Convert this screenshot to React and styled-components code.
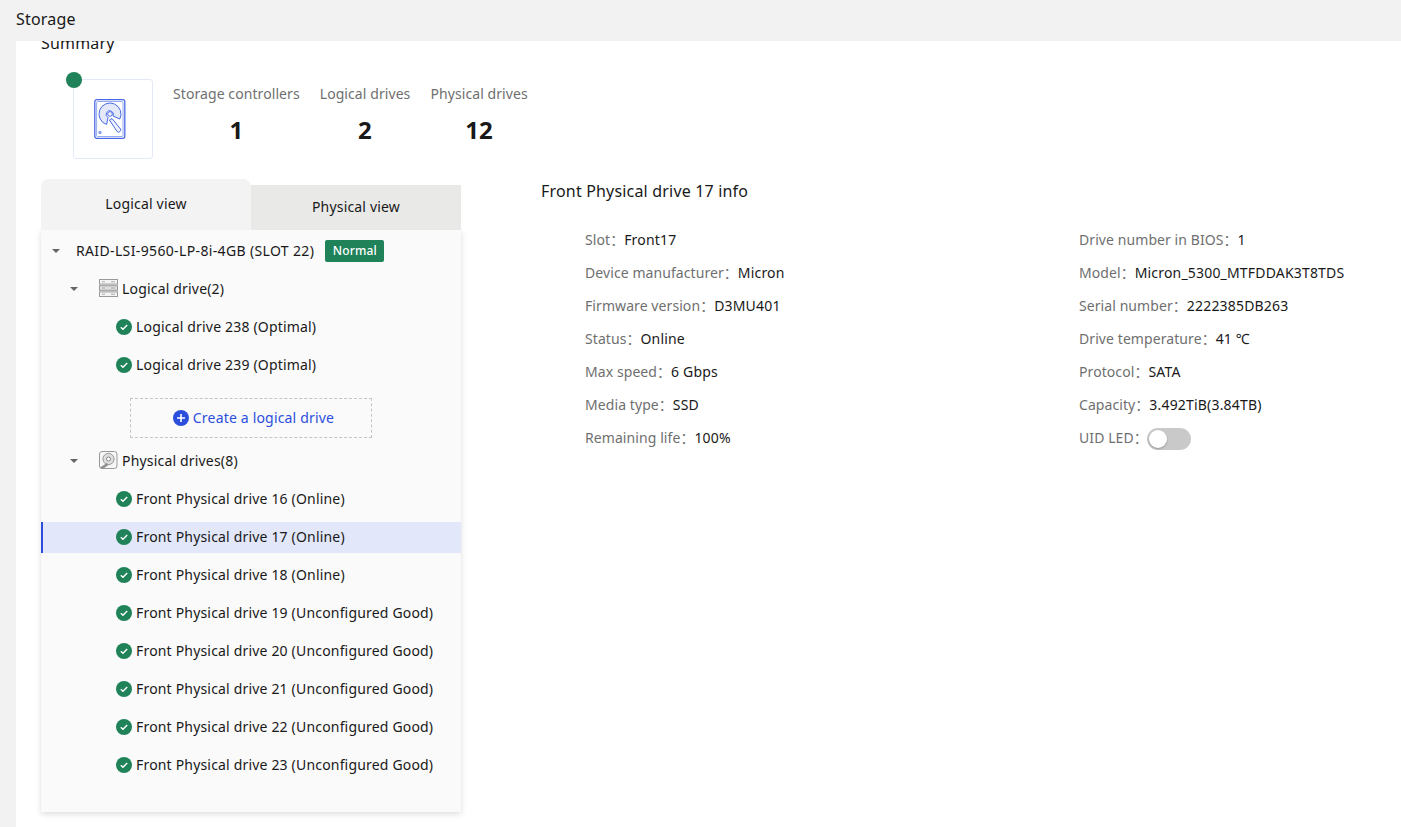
import React from 'react'
import styled, { createGlobalStyle } from 'styled-components'

const GREEN = '#1f8259'
const BLUE = '#2b4fdc'

const Global = createGlobalStyle`
  html, body {
    margin: 0;
    height: 100%;
    overflow: hidden;
    background: #f2f2f2;
    font-family: "Noto Sans", "Noto Sans CJK SC", "Open Sans", sans-serif;
    font-size: 14px;
    letter-spacing: 0.18px;
    color: #191919;
  }
`

const Page = styled.div`
  height: 827px;
  display: flex;
  flex-direction: column;
`

const Header = styled.header`
  flex: 0 0 41px;
  height: 41px;
  padding-left: 16px;
  font-size: 16px;
  line-height: 38px;
  color: #191919;
`

const Main = styled.main`
  flex: 1;
  margin-left: 16px;
  background: #fff;
  overflow: hidden;
  padding-left: 25px;
`

const SectionTitle = styled.h2`
  margin: -9px 0 0;
  font-size: 16px;
  font-weight: 400;
  line-height: 22px;
`

const Summary = styled.section`
  display: flex;
  margin: 25px 0 0 32px;
  gap: 20px;
  height: 80px;
`

const IconBox = styled.div`
  position: relative;
  width: 80px;
  height: 80px;
  box-sizing: border-box;
  border: 1px solid #e4e9fa;
  border-radius: 3px;
  display: flex;
  align-items: center;
  justify-content: center;

  svg {
    margin-right: 6px;
  }
`

const StatusDot = styled.span`
  position: absolute;
  left: -8px;
  top: -8px;
  width: 16px;
  height: 16px;
  border-radius: 50%;
  background: ${GREEN};
`

const Stat = styled.div`
  display: flex;
  flex-direction: column;
  align-items: center;
`

const StatLabel = styled.span`
  color: #6f6f6f;
  line-height: 20px;
  margin-top: 5px;
  letter-spacing: 0.08px;
`

const StatValue = styled.span`
  font-size: 24px;
  font-weight: 700;
  line-height: 32px;
  margin-top: 10px;
`

const Content = styled.div`
  display: flex;
  margin-top: 20px;
`

const LeftColumn = styled.div`
  flex: 0 0 420px;
  width: 420px;
`

const Tabs = styled.div`
  display: flex;
  align-items: flex-end;
  height: 51px;
`

const Tab = styled.div`
  flex: 1;
  text-align: center;
  height: ${p => (p.$active ? 51 : 45)}px;
  line-height: ${p => (p.$active ? 49 : 44)}px;
  background: ${p => (p.$active ? '#f3f3f3' : '#e9e9e7')};
  border-radius: ${p => (p.$active ? '8px 8px 0 0' : '0')};
`

const TreePanel = styled.div`
  height: 582px;
  box-sizing: border-box;
  padding-top: 1px;
  background: #fafafa;
  box-shadow: 0 2px 6px rgba(0, 0, 0, 0.14);
`

const Row = styled.div`
  height: 38px;
  display: flex;
  align-items: center;
  box-sizing: border-box;
  padding-left: ${p => p.$indent}px;
  white-space: nowrap;
  position: relative;

  ${p => p.$selected && `
    background: linear-gradient(#e2e8f9, #e2e8f9) 0 5px / 100% 31px no-repeat;

    &::before {
      content: '';
      position: absolute;
      left: 0;
      top: 5px;
      width: 2px;
      height: 31px;
      background: ${BLUE};
    }
  `}
`

const Caret = styled.span`
  width: 0;
  height: 0;
  margin-top: 2px;
  border-left: 4px solid transparent;
  border-right: 4px solid transparent;
  border-top: 4px solid #666;
`

const RootCaret = styled(Caret)`
  margin-right: 16px;
`

const GroupCaret = styled(Caret)`
  margin-right: 21px;
`

const RootLabel = styled.span`
  letter-spacing: 0.36px;
`

const GroupLabel = styled.span`
  margin-left: 4px;
`

const LeafLabel = styled.span`
  margin-left: 4px;
`

const LeafIcon = styled.span`
  display: flex;
  margin-top: 2px;
`

const Badge = styled.span`
  margin: 2px 0 0 11px;
  width: 59px;
  height: 22px;
  line-height: 22px;
  text-align: center;
  border-radius: 2px;
  background: ${GREEN};
  color: #fff;
  font-size: 12px;
  font-weight: 500;
`

const CreateWrap = styled.div`
  height: 58px;
  padding: 15px 0 0 89px;
  box-sizing: border-box;
`

const CreateButton = styled.div`
  width: 242px;
  height: 40px;
  box-sizing: border-box;
  padding-left: 5px;
  padding-bottom: 1px;
  border: 1px dashed #c4c4c4;
  display: flex;
  align-items: center;
  justify-content: center;
  gap: 4px;
  color: ${BLUE};
`

const Details = styled.section`
  margin-left: 80px;
  flex: 1;
`

const DetailTitle = styled.h3`
  margin: 0;
  font-size: 16px;
  font-weight: 400;
  line-height: 24px;
`

const DetailGrid = styled.div`
  display: grid;
  grid-template-columns: 494px 1fr;
  grid-auto-rows: 33px;
  margin: 20px 0 0 44px;
`

const DetailItem = styled.div`
  display: flex;
  align-items: center;
  line-height: 20px;
  white-space: nowrap;
`

const DetailLabel = styled.span`
  color: #6f6f6f;
  letter-spacing: 0.08px;
`

const Colon = styled.span`
  display: inline-block;
  width: 14px;
  height: 20px;
  line-height: 20px;
  letter-spacing: 0;
  vertical-align: top;
`

const Toggle = styled.span`
  width: 44px;
  height: 22px;
  margin: 2px 0 0 -1px;
  border-radius: 11px;
  background: #c9c9c9;
  position: relative;

  &::after {
    content: '';
    position: absolute;
    left: 2px;
    top: 2px;
    width: 18px;
    height: 18px;
    border-radius: 50%;
    background: #fff;
    box-shadow: 0 1px 2px rgba(0, 0, 0, 0.25);
  }
`

const HddIcon = () => (
  <svg width="32" height="40" viewBox="0 0 32 40" fill="none">
    <rect x="0.8" y="0.7" width="30" height="38.6" rx="2" stroke="#4a6ae5" strokeWidth="1.3" />
    <rect x="2.6" y="2.5" width="26.4" height="35" rx="1" stroke="#7e95ec" strokeWidth="0.8" />
    <path d="M25.8 20A11 11 0 1 0 12.6 25.5L14 18.5A3.6 3.6 0 1 1 19 17z" fill="#e3e8fa" stroke="#4a6ae5" />
    <circle cx="16" cy="15" r="2.3" fill="#fff" stroke="#4a6ae5" />
    <path d="M15.5 21L18 19.5L26.5 30a2.2 2.2 0 0 1-3.4 2.6z" fill="#eef1fc" stroke="#4a6ae5" />
    <circle cx="6" cy="33.5" r="1.7" fill="#8da1ef" />
  </svg>
)

const ServerIcon = () => (
  <svg width="19" height="18" viewBox="0 0 19 18" fill="none">
    <rect x="0.5" y="0.5" width="18" height="4.6" fill="#f4f4f4" stroke="#999" />
    <rect x="0.5" y="6.7" width="18" height="4.6" fill="#ddd" stroke="#999" />
    <rect x="0.5" y="12.9" width="18" height="4.6" fill="#f4f4f4" stroke="#999" />
    <path d="M3 2.8h3M3 9h3M3 15.2h3M12 2.8h4M12 9h4M12 15.2h4" stroke="#aaa" />
  </svg>
)

const DiskIcon = () => (
  <svg width="19" height="18" viewBox="0 0 19 18" fill="none">
    <rect x="0.5" y="0.5" width="17.5" height="17" rx="2.5" fill="#f6f6f6" stroke="#999" />
    <circle cx="9.5" cy="8" r="5.6" fill="#ddd" stroke="#999" />
    <circle cx="9.5" cy="8" r="2" fill="#fff" stroke="#888" />
    <path d="M1 16.5l7-4.5 1.5 2-5 3.5H2z" fill="#8f8f8f" />
  </svg>
)

const CheckIcon = () => (
  <svg width="16" height="16" viewBox="0 0 16 16">
    <circle cx="8" cy="8" r="8" fill={GREEN} />
    <path d="M4.8 8.2l2.2 2.1 4.2-4.2" fill="none" stroke="#fff" strokeWidth="1.4" />
  </svg>
)

const PlusIcon = () => (
  <svg width="16" height="16" viewBox="0 0 16 16">
    <circle cx="8" cy="8" r="8" fill={BLUE} />
    <path d="M8 4v8M4 8h8" stroke="#fff" strokeWidth="1.6" />
  </svg>
)

const Leaf = ({ label, selected }) => (
  <Row $indent={75} $selected={selected}>
    <LeafIcon><CheckIcon /></LeafIcon>
    <LeafLabel>{label}</LeafLabel>
  </Row>
)

const physicalDrives = [
  ['16', 'Online'],
  ['17', 'Online'],
  ['18', 'Online'],
  ['19', 'Unconfigured Good'],
  ['20', 'Unconfigured Good'],
  ['21', 'Unconfigured Good'],
  ['22', 'Unconfigured Good'],
  ['23', 'Unconfigured Good'],
]

const leftInfo = [
  ['Slot', 'Front17'],
  ['Device manufacturer', 'Micron'],
  ['Firmware version', 'D3MU401'],
  ['Status', 'Online'],
  ['Max speed', '6 Gbps'],
  ['Media type', 'SSD'],
  ['Remaining life', '100%'],
]

const rightInfo = [
  ['Drive number in BIOS', '1'],
  ['Model', 'Micron_5300_MTFDDAK3T8TDS'],
  ['Serial number', '2222385DB263'],
  ['Drive temperature', '41 ℃'],
  ['Protocol', 'SATA'],
  ['Capacity', '3.492TiB(3.84TB)'],
  ['UID LED', null],
]

const Info = ({ label, children }) => (
  <DetailItem>
    <DetailLabel>{label}<Colon>：</Colon></DetailLabel>
    {children}
  </DetailItem>
)

export default function App() {
  return (
    <Page lang="zh-CN">
      <Global />
      <Header>Storage</Header>
      <Main>
        <SectionTitle>Summary</SectionTitle>
        <Summary>
          <IconBox>
            <StatusDot />
            <HddIcon />
          </IconBox>
          <Stat>
            <StatLabel>Storage controllers</StatLabel>
            <StatValue>1</StatValue>
          </Stat>
          <Stat>
            <StatLabel>Logical drives</StatLabel>
            <StatValue>2</StatValue>
          </Stat>
          <Stat>
            <StatLabel>Physical drives</StatLabel>
            <StatValue>12</StatValue>
          </Stat>
        </Summary>
        <Content>
          <LeftColumn>
            <Tabs>
              <Tab $active>Logical view</Tab>
              <Tab>Physical view</Tab>
            </Tabs>
            <TreePanel>
              <Row $indent={11}>
                <RootCaret />
                <RootLabel>RAID-LSI-9560-LP-8i-4GB (SLOT 22)</RootLabel>
                <Badge>Normal</Badge>
              </Row>
              <Row $indent={29}>
                <GroupCaret />
                <ServerIcon />
                <GroupLabel>Logical drive(2)</GroupLabel>
              </Row>
              <Leaf label="Logical drive 238 (Optimal)" />
              <Leaf label="Logical drive 239 (Optimal)" />
              <CreateWrap>
                <CreateButton>
                  <PlusIcon />
                  Create a logical drive
                </CreateButton>
              </CreateWrap>
              <Row $indent={29}>
                <GroupCaret />
                <DiskIcon />
                <GroupLabel>Physical drives(8)</GroupLabel>
              </Row>
              {physicalDrives.map(([num, state]) => (
                <Leaf
                  key={num}
                  label={`Front Physical drive ${num} (${state})`}
                  selected={num === '17'}
                />
              ))}
            </TreePanel>
          </LeftColumn>
          <Details>
            <DetailTitle>Front Physical drive 17 info</DetailTitle>
            <DetailGrid>
              {leftInfo.map(([label, value], i) => (
                <React.Fragment key={label}>
                  <Info label={label}>{value}</Info>
                  <Info label={rightInfo[i][0]}>
                    {rightInfo[i][1] === null ? <Toggle /> : rightInfo[i][1]}
                  </Info>
                </React.Fragment>
              ))}
            </DetailGrid>
          </Details>
        </Content>
      </Main>
    </Page>
  )
}
